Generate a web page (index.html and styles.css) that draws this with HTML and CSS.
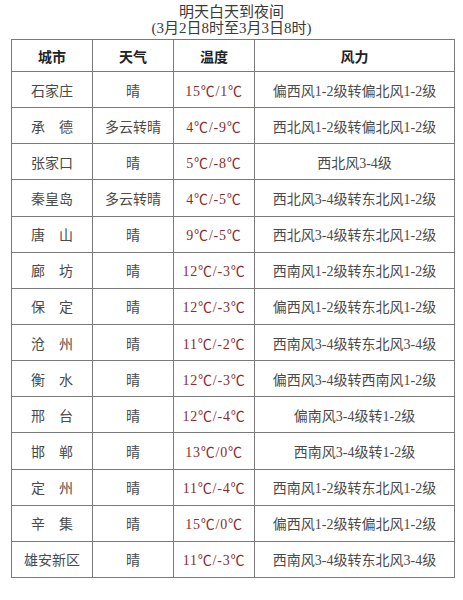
FILE: index.html
```html
<!DOCTYPE html>
<html lang="zh">
<head>
<meta charset="utf-8">
<link rel="stylesheet" href="styles.css">
</head>
<body>
<div class="page">
  <div class="title">
    <div>明天白天到夜间</div>
    <div>(3月2日8时至3月3日8时)</div>
  </div>
  <table class="wx">
    <colgroup><col class="c1"><col class="c2"><col class="c3"><col class="c4"></colgroup>
    <thead>
      <tr><th>城市</th><th>天气</th><th>温度</th><th>风力</th></tr>
    </thead>
    <tbody>
      <tr><td>石家庄</td><td>晴</td><td class="t">15℃/1℃</td><td>偏西风1-2级转偏北风1-2级</td></tr>
      <tr><td>承　德</td><td>多云转晴</td><td class="t">4℃/-9℃</td><td>西北风1-2级转偏北风1-2级</td></tr>
      <tr><td>张家口</td><td>晴</td><td class="t">5℃/-8℃</td><td>西北风3-4级</td></tr>
      <tr><td>秦皇岛</td><td>多云转晴</td><td class="t">4℃/-5℃</td><td>西北风3-4级转东北风1-2级</td></tr>
      <tr><td>唐　山</td><td>晴</td><td class="t">9℃/-5℃</td><td>西北风3-4级转东北风1-2级</td></tr>
      <tr><td>廊　坊</td><td>晴</td><td class="t">12℃/-3℃</td><td>西南风1-2级转东北风1-2级</td></tr>
      <tr><td>保　定</td><td>晴</td><td class="t">12℃/-3℃</td><td>偏西风1-2级转东北风1-2级</td></tr>
      <tr><td>沧　州</td><td>晴</td><td class="t">11℃/-2℃</td><td>西南风3-4级转东北风3-4级</td></tr>
      <tr><td>衡　水</td><td>晴</td><td class="t">12℃/-3℃</td><td>偏西风3-4级转西南风1-2级</td></tr>
      <tr><td>邢　台</td><td>晴</td><td class="t">12℃/-4℃</td><td>偏南风3-4级转1-2级</td></tr>
      <tr><td>邯　郸</td><td>晴</td><td class="t">13℃/0℃</td><td>西南风3-4级转1-2级</td></tr>
      <tr><td>定　州</td><td>晴</td><td class="t">11℃/-4℃</td><td>西南风1-2级转东北风1-2级</td></tr>
      <tr><td>辛　集</td><td>晴</td><td class="t">15℃/0℃</td><td>偏西风1-2级转偏北风1-2级</td></tr>
      <tr><td>雄安新区</td><td>晴</td><td class="t">11℃/-3℃</td><td>西南风3-4级转东北风3-4级</td></tr>
    </tbody>
  </table>
</div>
</body>
</html>
```

FILE: styles.css
```css
html, body {
  margin: 0;
  padding: 0;
  background: #ffffff;
}
.page {
  width: 463px;
  font-family: "Liberation Serif", "Noto Sans CJK SC", serif;
  color: #4a4a4a;
}
.title {
  padding-top: 4px;
  text-align: center;
  font-size: 15px;
  line-height: 16px;
  color: #3a3a3a;
}
.wx {
  margin: 3px 0 0 11px;
  width: 443px;
  border-collapse: collapse;
  table-layout: fixed;
  font-size: 14px;
}
.c1, .c2, .c3 { width: 81px; }
.c4 { width: 200px; }
.wx th, .wx td {
  border: 1.5px solid #7a7a7a;
  text-align: center;
  padding: 0;
  white-space: nowrap;
}
.wx th {
  height: 31px;
  font-weight: bold;
  color: #222222;
}
.wx td {
  height: 35.15px;
}
.wx td.t {
  color: #8a2c2c;
  letter-spacing: 0.8px;
}
```
